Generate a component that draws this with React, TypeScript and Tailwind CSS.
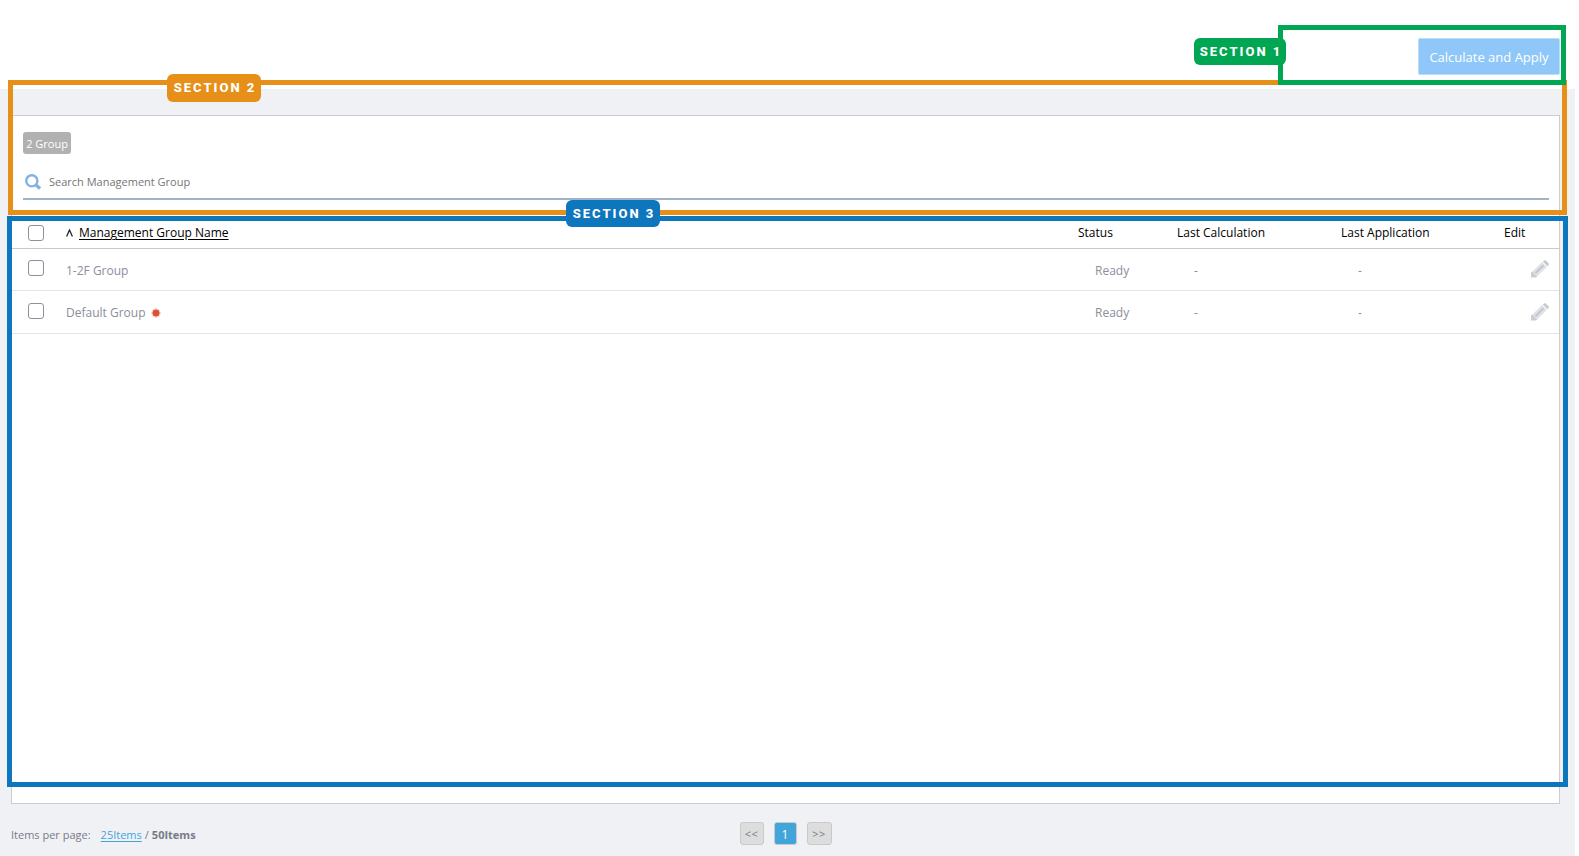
import { useState } from "react";
import clsx from "clsx";

type Group = {
  id: string;
  name: string;
  status: string;
  lastCalculation: string;
  lastApplication: string;
  isDefault?: boolean;
};

const GROUPS: Group[] = [
  { id: "1-2f", name: "1-2F Group", status: "Ready", lastCalculation: "-", lastApplication: "-" },
  { id: "default", name: "Default Group", status: "Ready", lastCalculation: "-", lastApplication: "-", isDefault: true },
];

const CHECKBOX =
  "block size-4 appearance-none rounded-[3px] border border-[#8f8f9d] bg-white checked:border-[#0e76bd] checked:bg-[#0e76bd]";

const PAGE_BUTTON = "flex h-[23px] items-center justify-center rounded-[3px] border border-[#c8c9cb] pt-0.5";

function SearchIcon() {
  return (
    <svg viewBox="0 0 16 16" className="size-4 shrink-0" fill="none" stroke="#82b1e2" aria-hidden="true">
      <circle cx="6.8" cy="6.8" r="5.6" strokeWidth="2.4" />
      <path d="M11 11 15 14.6" strokeWidth="3.2" />
    </svg>
  );
}

function PencilIcon() {
  return (
    <svg viewBox="0 0 18 18" className="h-[18px] w-[18px]" aria-hidden="true">
      <path d="M0 17.5V12.4L1.2 11.2 6.4 16.4 5 17.5Z" fill="#c9cdd4" />
      <path d="M1.4 11.4 11 2 15.9 6.9 6.3 16.3Z" fill="#dfe2e7" />
      <path d="M4.4 13.2 12.6 5.2" stroke="#c3c7ce" strokeWidth="2" />
      <path d="M11.8 1.5 13 .4Q14-.2 14.9.6L17.5 3.2Q18.3 4.2 17.6 5L16.5 6.2Z" fill="#c5c9d0" />
    </svg>
  );
}

function DefaultMark() {
  return (
    <svg viewBox="0 0 10 10" className="size-[10px]" role="img" aria-label="Default">
      <circle cx="5" cy="5" r="4.5" fill="#f6d3cc" />
      <path
        d="M5 .6V9.4M.6 5H9.4M1.9 1.9 8.1 8.1M8.1 1.9 1.9 8.1"
        stroke="#e58a7a"
        strokeWidth="1"
      />
      <circle cx="5" cy="5" r="3.3" fill="#dc4f38" />
    </svg>
  );
}

function SectionFrame({ label, frame, badge, color }: { label: string; frame: string; badge: string; color: string }) {
  return (
    <div className={clsx("pointer-events-none absolute border-5", frame)}>
      <span
        className={clsx(
          "absolute flex items-center justify-center rounded-md pl-0.5 font-[Roboto,sans-serif] text-[13px] font-extrabold tracking-[2px] whitespace-nowrap text-white",
          badge,
          color,
        )}
      >
        {label}
      </span>
    </div>
  );
}

export default function App() {
  const [selected, setSelected] = useState<string[]>([]);
  const [query, setQuery] = useState("");

  const rows = GROUPS.filter((g) => g.name.toLowerCase().includes(query.toLowerCase()));
  const allSelected = selected.length === GROUPS.length;

  const toggle = (id: string) => {
    setSelected((prev) => (prev.includes(id) ? prev.filter((s) => s !== id) : [...prev, id]));
  };

  return (
    <div className="relative flex min-h-screen flex-col bg-white font-['Open_Sans','Noto_Sans',sans-serif] text-xs text-[#8b8e9b]">
      <header className="flex h-[89px] shrink-0 items-start justify-end pt-[38px] pr-[19px]">
        <button
          type="button"
          className="h-[37px] w-[142px] rounded-[2px] border border-[#b9ddfa] bg-[#8fc8f8] pt-0.5 text-[13px] whitespace-nowrap text-white"
        >
          Calculate and Apply
        </button>
      </header>

      <main className="mr-1 flex flex-1 flex-col bg-[#f0f1f5] pt-[26px] pr-[15px] pl-[11px]">
        <section className="flex flex-1 flex-col border border-[#cccdd0] bg-white">
          <div className="pt-4 pr-[10px] pl-[11px]">
            <span className="flex h-[22px] w-12 items-center justify-center rounded-[3px] bg-[#b1b1b1] pt-0.5 text-[11px] whitespace-nowrap text-white">
              2 Group
            </span>
            <label className="mt-2 flex h-[38px] items-center gap-2 border-b-2 border-[#9eb3c7] pt-1 pl-0.5">
              <SearchIcon />
              <input
                type="text"
                aria-label="Search Management Group"
                placeholder="Search Management Group"
                value={query}
                onChange={(e) => setQuery(e.target.value)}
                className="flex-1 bg-transparent text-[11px] text-[#555] outline-none placeholder:text-[#757575]"
              />
            </label>
          </div>

          <table className="mt-4 w-full table-fixed border-collapse text-left">
            <colgroup>
              <col className="w-[54px]" />
              <col />
              <col className="w-[99px]" />
              <col className="w-[164px]" />
              <col className="w-[163px]" />
              <col className="w-[55px]" />
            </colgroup>
            <thead>
              <tr className="h-8 border-b border-[#c6c9cc] text-black">
                <th className="pt-[3px] pl-4">
                  <input
                    type="checkbox"
                    aria-label="Select all groups"
                    checked={allSelected}
                    onChange={() => setSelected(allSelected ? [] : GROUPS.map((g) => g.id))}
                    className={CHECKBOX}
                  />
                </th>
                <th className="pt-[3px] font-normal">
                  <button type="button" className="flex items-center gap-[6px]">
                    <svg viewBox="0 0 7 8" className="h-2 w-[7px]" fill="none" stroke="#222" strokeWidth="1.3" aria-hidden="true">
                      <path d="M.6 7.5 3.5 1 6.4 7.5" />
                    </svg>
                    <span className="underline underline-offset-2">Management Group Name</span>
                  </button>
                </th>
                <th className="pt-[3px] font-normal">Status</th>
                <th className="pt-[3px] font-normal">Last Calculation</th>
                <th className="pt-[3px] font-normal">Last Application</th>
                <th className="pt-[3px] font-normal">Edit</th>
              </tr>
            </thead>
            <tbody>
              {rows.map((group) => (
                <tr key={group.id} className="h-[42px] border-b border-[#e0e5ea] last:h-[43px]">
                  <td className="pb-0.5 pl-4">
                    <input
                      type="checkbox"
                      aria-label={`Select ${group.name}`}
                      checked={selected.includes(group.id)}
                      onChange={() => toggle(group.id)}
                      className={CHECKBOX}
                    />
                  </td>
                  <td className="pt-[3px]">
                    <span className="flex items-center gap-[6px]">
                      {group.name}
                      {group.isDefault && <DefaultMark />}
                    </span>
                  </td>
                  <td className="pt-[3px] pl-[17px]">{group.status}</td>
                  <td className="pt-[3px] pl-[17px]">{group.lastCalculation}</td>
                  <td className="pt-[3px] pl-[17px]">{group.lastApplication}</td>
                  <td className="pr-[10px]">
                    <button type="button" aria-label={`Edit ${group.name}`} className="ml-auto block">
                      <PencilIcon />
                    </button>
                  </td>
                </tr>
              ))}
            </tbody>
          </table>
        </section>

        <footer className="grid h-[52px] shrink-0 grid-cols-[1fr_auto_1fr] items-center text-[11px] text-[#777b88]">
          <div className="flex items-center pt-[10px]">
            <span>Items per page:</span>
            <a href="#25" className="ml-[10px] text-[#42a5da] underline underline-offset-2">
              25Items
            </a>
            <span className="mx-[3px]">/</span>
            <strong className="font-bold">50Items</strong>
          </div>
          <nav aria-label="Pagination" className="flex gap-[10px] pt-[7px]">
            <button type="button" aria-label="Previous page" className={clsx(PAGE_BUTTON, "w-6 bg-[#dddddd] tracking-wider")}>
              &lt;&lt;
            </button>
            <button type="button" aria-current="page" className={clsx(PAGE_BUTTON, "w-[23px] bg-[#42a5da] text-xs text-white")}>
              1
            </button>
            <button type="button" aria-label="Next page" className={clsx(PAGE_BUTTON, "w-[25px] bg-[#dddddd] tracking-wider")}>
              &gt;&gt;
            </button>
          </nav>
        </footer>
      </main>

      <SectionFrame
        label="SECTION 2"
        frame="top-20 right-3 left-2 h-[135px] border-[#e6901a]"
        badge="-top-[11px] left-[154px] h-7 w-[94px]"
        color="bg-[#e6901a]"
      />
      <SectionFrame
        label="SECTION 1"
        frame="top-[25px] right-[13px] h-[60px] w-[288px] border-[#00a651]"
        badge="top-2 -left-[89px] h-[27px] w-[92px]"
        color="bg-[#00a651]"
      />
      <SectionFrame
        label="SECTION 3"
        frame="top-[216px] right-[11px] bottom-[69px] left-[7px] border-[#0e76bd]"
        badge="-top-[21px] left-[554px] h-[27px] w-[94px]"
        color="bg-[#0e76bd]"
      />
    </div>
  );
}
